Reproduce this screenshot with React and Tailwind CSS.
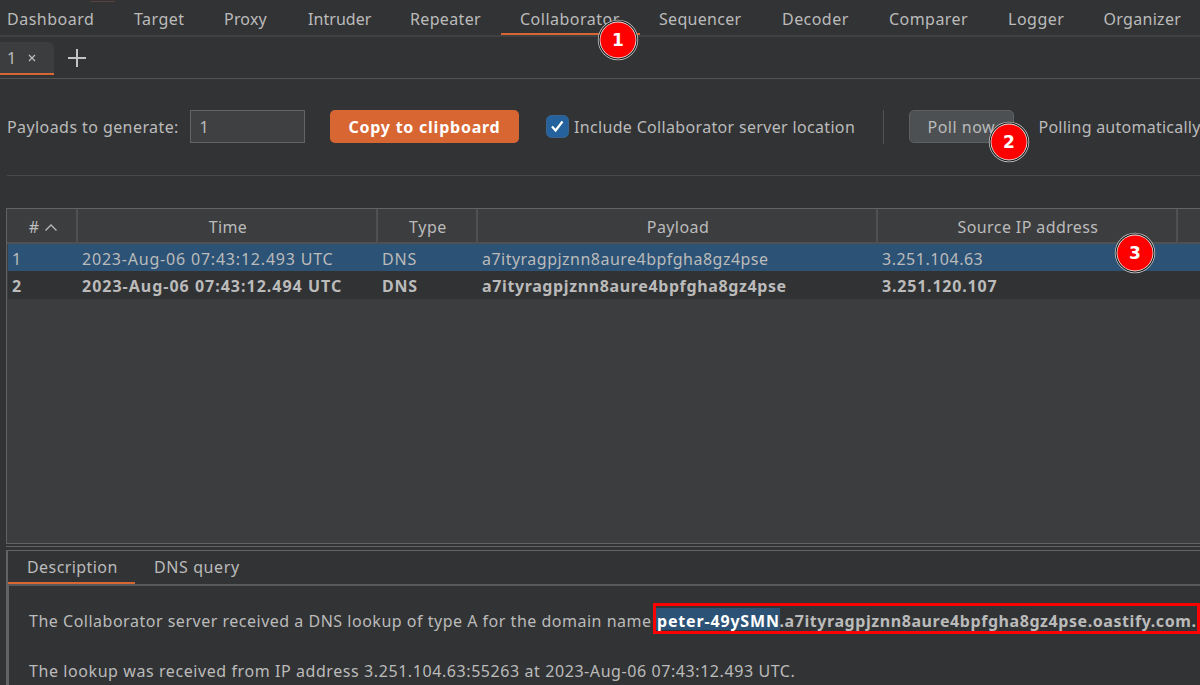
const TABS = [
  { label: 'Dashboard', cls: 'w-[127px] pl-[19px] tracking-[0.5px]' },
  { label: 'Target', cls: 'w-[90px] pl-[19px] tracking-[0.45px]' },
  { label: 'Proxy', cls: 'w-[84px] pl-[19px] tracking-[0.2px]' },
  { label: 'Intruder', cls: 'w-[102px] pl-[19px] tracking-[0.05px]' },
  { label: 'Repeater', cls: 'w-[110px] pl-[19px] tracking-[0.35px]' },
  { label: 'Collaborator', cls: 'w-[139px] pl-[19px] tracking-[0.5px]', active: true },
  { label: 'Sequencer', cls: 'w-[123px] pl-[19px] tracking-[0.3px]' },
  { label: 'Decoder', cls: 'w-[107px] pl-[19px] tracking-[0.45px]' },
  { label: 'Comparer', cls: 'w-[119px] pl-[19px] tracking-[0.45px]' },
  { label: 'Logger', cls: 'w-[95px] pl-[19px] tracking-[0.5px]' },
  { label: 'Organizer', cls: 'w-[116px] pl-[19.5px] tracking-[0.3px]' },
];

const COLS = 'grid grid-cols-[70px_300px_100px_400px_300px_100px] w-[1270px]';

function Marker({ n, cls }) {
  return (
    <div className={`absolute z-10 size-10 ${cls}`}>
      <svg viewBox="0 0 40 40" className="absolute inset-0 size-10 overflow-visible">
        <circle cx="20" cy="20" r="20.2" fill="#c9c9c9" />
        <circle cx="20" cy="20" r="19.4" fill="#111" />
        <circle cx="20" cy="20" r="18.4" fill="#eee" />
        <circle cx="20" cy="20" r="17.6" fill="#fe0000" />
      </svg>
      <span className="relative flex size-10 items-center justify-center font-['DejaVu_Sans'] text-[17px] leading-none font-bold text-white">{n}</span>
    </div>
  );
}

function HeaderCell({ children }) {
  return <div className="flex items-center justify-center border-r-2 border-[#4e5052] pt-[3px] pl-[2px]">{children}</div>;
}

function TopTabs() {
  return (
    <nav className="h-[37px] shrink-0 overflow-hidden border-b-2 border-[#3f4042]">
      <div className="-ml-3 flex h-full w-[1230px]">
        {TABS.map((t) => (
          <div key={t.label} className={`h-[35px] shrink-0 leading-[38px] ${t.cls} ${t.active ? 'border-b-2 border-[#d86633]' : ''}`}>
            {t.label}
          </div>
        ))}
      </div>
    </nav>
  );
}

function SubTabs() {
  return (
    <div className="flex h-[42px] shrink-0 border-b border-[#515355] pt-[5px]">
      <div className="flex h-[33px] w-[54px] items-center rounded-tr-md border-b-2 border-[#d86633] bg-[#3c3d3e] pl-[7px]">
        <span className="pt-px leading-none">1</span>
        <svg viewBox="0 0 8 8" className="ml-[12px] size-2" stroke="#bbb" strokeWidth="1.3">
          <path d="M1 1l6 6M7 1l-6 6" />
        </svg>
      </div>
      <svg viewBox="0 0 18 18" className="mt-[7px] ml-[14px] size-[18px]" stroke="#c4c4c4" strokeWidth="2">
        <path d="M9 0v18M0 9h18" />
      </svg>
    </div>
  );
}

function Toolbar() {
  return (
    <div className="flex h-[96px] shrink-0 items-start pt-[31px] *:shrink-0">
      <span className="ml-[7px] w-[183px] leading-[34px] tracking-[0.42px]">Payloads to generate:</span>
      <div className="h-[33px] w-[115px] border border-[#646464] bg-[#3e4042] pl-[8.5px] leading-[33px]">1</div>
      <div className="ml-[25px] h-[33px] w-[189px] rounded-[5px] bg-[#d86633] pl-[18.5px] leading-[34px] font-bold tracking-[0.76px] text-white">Copy to clipboard</div>
      <svg viewBox="0 0 23 23" className="mt-[5px] ml-[27px] size-[23px]">
        <rect x="0.5" y="0.5" width="22" height="22" rx="5" fill="#25629d" stroke="#3a648d" />
        <path d="M6 11.5l3.6 4L16.5 6.5" fill="none" stroke="#fff" strokeWidth="2.2" />
      </svg>
      <span className="ml-[5px] w-[309px] leading-[34px] tracking-[0.33px]">Include Collaborator server location</span>
      <div className="h-[34px] w-px bg-[#515355]" />
      <div className="ml-[25px] h-[33px] w-[105px] rounded-[5px] border border-[#5e6062] bg-[#4c5052] pl-[17.5px] leading-[32px] tracking-[0.5px]">Poll now</div>
      <span className="ml-[24.5px] leading-[34px] tracking-[0.25px] whitespace-nowrap">Polling automatically</span>
    </div>
  );
}

function Table() {
  return (
    <section className="ml-[6px] h-[336px] shrink-0 overflow-hidden border border-r-0 border-[#616365] bg-[#3c3d3f]">
      <div className={`${COLS} h-[35px] border-b-2 border-[#4e5052] pl-px`}>
        <HeaderCell>
          <span>#</span>
          <svg viewBox="0 0 12 7" className="mt-px ml-[6px] h-[7px] w-3" fill="none" stroke="#bbb" strokeWidth="1.3">
            <path d="M0.5 6.5L6 1l5.5 5.5" />
          </svg>
        </HeaderCell>
        <HeaderCell><span className="tracking-[0.4px]">Time</span></HeaderCell>
        <HeaderCell><span className="tracking-[0.6px]">Type</span></HeaderCell>
        <HeaderCell><span className="tracking-[0.43px]">Payload</span></HeaderCell>
        <HeaderCell><span className="tracking-[0.4px]">Source IP address</span></HeaderCell>
        <div />
      </div>
      <div className={`${COLS} ml-px h-[27px] bg-[#2c5275] leading-[30px]`}>
        <span className="pl-1">1</span>
        <span className="pl-1 tracking-[0.8px]">2023-Aug-06 07:43:12.493 UTC</span>
        <span className="pl-1 tracking-[0.8px]">DNS</span>
        <span className="pl-1 tracking-[0.48px]">a7ityragpjznn8aure4bpfgha8gz4pse</span>
        <span className="pl-1 tracking-[0.5px]">3.251.104.63</span>
      </div>
      <div className={`${COLS} ml-px h-[28px] bg-[#313233] leading-[30px] font-bold`}>
        <span className="pl-1">2</span>
        <span className="pl-1 tracking-[1px]">2023-Aug-06 07:43:12.494 UTC</span>
        <span className="pl-1 tracking-[0.8px]">DNS</span>
        <span className="pl-1 tracking-[0.62px]">a7ityragpjznn8aure4bpfgha8gz4pse</span>
        <span className="pl-1 tracking-[0.8px]">3.251.120.107</span>
      </div>
    </section>
  );
}

function Details() {
  return (
    <section className="ml-[6px] flex min-h-0 grow flex-col border-t border-l-2 border-[#616365]">
      <div className="flex h-[35px] shrink-0 border-b-2 border-[#58595b]">
        <div className="h-[33px] w-[127px] border-b-2 border-[#d86633] pl-[19px] leading-[33px] tracking-[0.42px]">Description</div>
        <div className="pl-[19px] leading-[33px] tracking-[0.6px]">DNS query</div>
      </div>
      <div className="grow border-l border-[#616365] pt-[19px] pl-[20px] whitespace-nowrap">
        <p className="flex h-[32px] leading-[32px]">
          <span className="w-[627px] tracking-[0.51px]">The Collaborator server received a DNS lookup of type A for the domain name</span>
          <span className="relative mt-[3px] h-[22px] w-[123.5px] bg-[#2c5275] pl-px leading-[26px] font-bold tracking-[0.83px] text-white">
            peter-49ySMN
            <span className="absolute -top-[5px] -left-[3px] h-[31px] w-[547px] border-[3px] border-[#f80202]" />
          </span>
          <span className="font-bold tracking-[0.57px]">.a7ityragpjznn8aure4bpfgha8gz4pse.oastify.com.</span>
        </p>
        <p className="mt-[18px] leading-[32px] tracking-[0.58px]">The lookup was received from IP address 3.251.104.63:55263 at 2023-Aug-06 07:43:12.493 UTC.</p>
      </div>
    </section>
  );
}

export default function App() {
  return (
    <div className="relative flex h-[685px] w-[1200px] flex-col overflow-hidden bg-[#323335] font-['Noto_Sans',sans-serif] text-[16px] text-[#bbbbbb]">
      <div className="absolute top-[1px] left-[90px] h-px w-[25px] bg-[#5a4038]" />
      <TopTabs />
      <SubTabs />
      <Toolbar />
      <div className="ml-[7px] h-px shrink-0 bg-[#48494b]" />
      <div className="h-8 shrink-0" />
      <Table />
      <div className="mt-[2px] mb-[3px] ml-[6px] h-px shrink-0 bg-[#616365]" />
      <Details />
      <Marker n="1" cls="top-[20px] left-[598px]" />
      <Marker n="2" cls="top-[122px] left-[989px]" />
      <Marker n="3" cls="top-[233px] left-[1115px]" />
    </div>
  );
}
